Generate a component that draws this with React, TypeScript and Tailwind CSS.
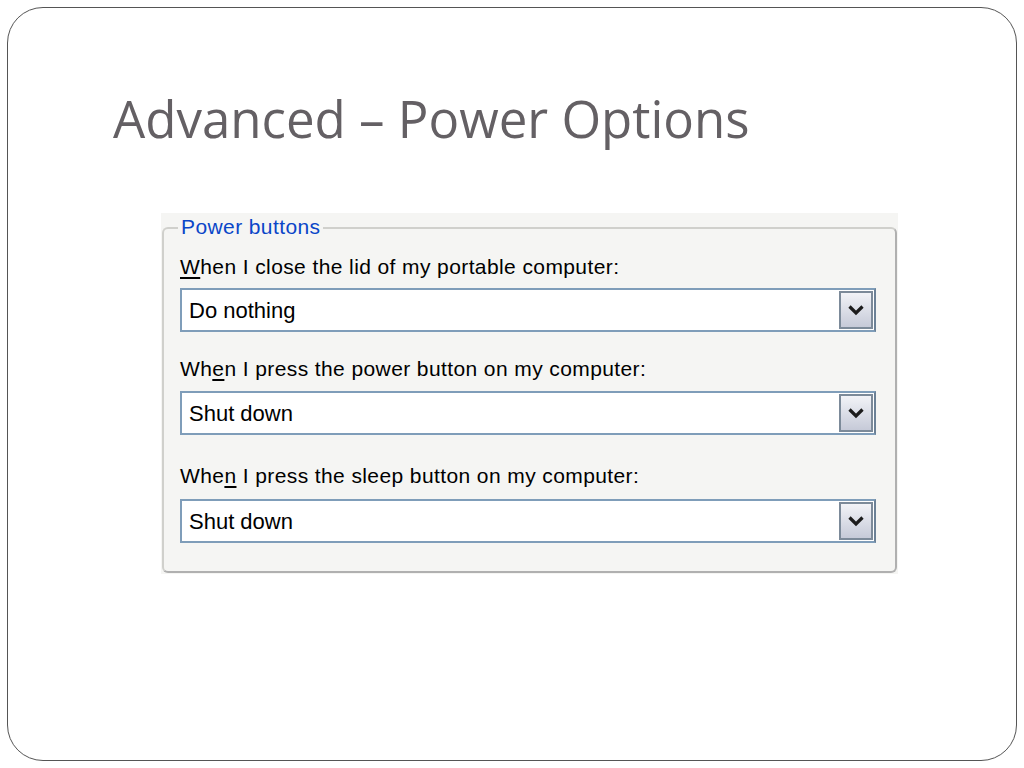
import React from "react";

const items = [
  { pre: "", key: "W", post: "hen I close the lid of my portable computer:", value: "Do nothing", mt: "mt-[26px]", mb: "mb-[9px]" },
  { pre: "Wh", key: "e", post: "n I press the power button on my computer:", value: "Shut down", mt: "mt-[25px]", mb: "mb-[10px]" },
  { pre: "Whe", key: "n", post: " I press the sleep button on my computer:", value: "Shut down", mt: "mt-[29px]", mb: "mb-[11px]" },
];

function Chevron() {
  return (
    <svg width="18" height="12" viewBox="0 0 18 12">
      <path d="M2.5 2.5 L9 9 L15.5 2.5" fill="none" stroke="#1c1c1c" strokeWidth="3.2" />
    </svg>
  );
}

function Combo({ value }: { value: string }) {
  return (
    <div className="flex h-[44px] items-center border-2 border-[#7f9db9] border-r-[#6c8196] bg-white pl-[7px] pr-[1px]">
      <span className="flex-1 text-[22px] text-black">{value}</span>
      <div className="flex h-[38px] w-[34px] items-center justify-center border-2 border-[#7c8a99] bg-gradient-to-b from-[#f2f3f7] to-[#c6cad8]">
        <Chevron />
      </div>
    </div>
  );
}

export default function App() {
  return (
    <div className="h-[768px] w-[1024px] bg-white p-[7px]" style={{ fontFamily: "'Liberation Sans', Arial, sans-serif" }}>
      <div className="h-full w-full rounded-[36px] border border-[#555555] pl-[105px] pt-[80px]">
        <h1 className="text-[51px] leading-[60px] text-[#646064]" style={{ fontFamily: "'Open Sans', sans-serif" }}>
          Advanced – Power Options
        </h1>
        <div className="ml-[48px] mt-[65px] w-[737px] bg-[#f5f5f3] pl-[1px] pr-[1px] pt-[14px] pb-[1px]">
          <div className="relative rounded-[6px] border-2 border-[#d0d0cc] border-b-[#b0b0b0] border-r-[#b0b0b0] pl-[16px] pr-[19px] pb-[28px]">
            <span className="absolute -top-[14px] left-[14px] bg-[#f5f5f3] px-[3px] text-[21px] leading-[24px] tracking-[0.4px] text-[#0a46c8]">
              Power buttons
            </span>
            <div className="flex flex-col">
              {items.map((it, i) => (
                <div key={i} className={it.mt}>
                  <div className={`${it.mb} text-[21px] leading-[24px] tracking-[0.4px] text-black`}>
                    {it.pre}
                    <span className="underline underline-offset-[3px]">{it.key}</span>
                    {it.post}
                  </div>
                  <Combo value={it.value} />
                </div>
              ))}
            </div>
          </div>
        </div>
      </div>
    </div>
  );
}
